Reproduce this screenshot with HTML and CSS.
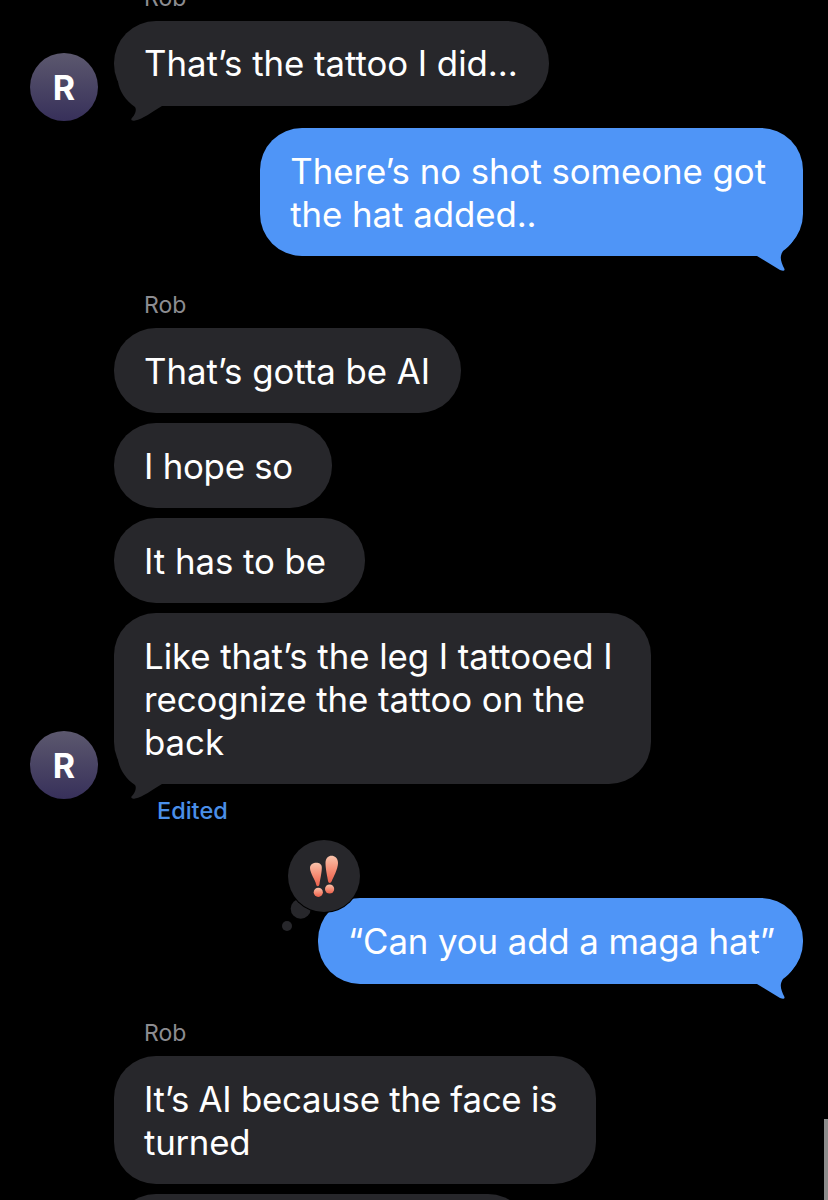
FILE: index.html
```html
<!DOCTYPE html>
<html lang="en">
<head>
<meta charset="utf-8">
<title>Messages</title>
<link rel="stylesheet" href="styles.css">
</head>
<body>
<main class="thread">
  <div class="row label-row"><span class="slot"></span><span class="sender">Rob</span></div>

  <div class="row in">
    <div class="avatar">R</div>
    <div class="bubble dark first">That’s the tattoo I did...
      <svg class="tail tail-in" viewBox="0 0 50 40" aria-hidden="true"><path d="M0 0 C1 10 8 20 17 26 C19 29 17 34 13.500 37.500 C12.500 39.500 15 40 17 39.500 C25 38 34 31 44 25 L44 0 Z"/></svg>
    </div>
  </div>

  <div class="row out gap-out">
    <div class="bubble blue wrapped-out">There’s no shot someone got<br>the hat added..
      <svg class="tail tail-out" viewBox="0 0 50 50" aria-hidden="true"><path d="M3 31 L26 45 Q31 47 30.500 44 C27 37 25 32 29 26 C36 21 43 13 46 0 L3 0 Z"/></svg>
    </div>
  </div>

  <div class="row label-row gap-label"><span class="slot"></span><span class="sender">Rob</span></div>
  <div class="row in"><span class="slot"></span><div class="bubble dark">That’s gotta be AI</div></div>
  <div class="row in gap-in"><span class="slot"></span><div class="bubble dark wrapped tight">I hope so</div></div>
  <div class="row in gap-in"><span class="slot"></span><div class="bubble dark wrapped">It has to be</div></div>
  <div class="row in gap-in">
    <div class="avatar">R</div>
    <div class="bubble dark wrapped">Like that’s the leg I tattooed I<br>recognize the tattoo on the<br>back
      <svg class="tail tail-in" viewBox="0 0 50 40" aria-hidden="true"><path d="M0 0 C1 10 8 20 17 26 C19 29 17 34 13.500 37.500 C12.500 39.500 15 40 17 39.500 C25 38 34 31 44 25 L44 0 Z"/></svg>
    </div>
  </div>
  <div class="row label-row edited-row"><span class="slot"></span><span class="edited">Edited</span></div>

  <div class="row out gap-react">
    <div class="bubble blue quote">“Can you add a maga hat”
      <svg class="tail tail-out" viewBox="0 0 50 50" aria-hidden="true"><path d="M3 31 L26 45 Q31 47 30.500 44 C27 37 25 32 29 26 C36 21 43 13 46 0 L3 0 Z"/></svg>
      <svg class="reaction" viewBox="0 0 86 96" aria-hidden="true">
        <defs>
          <linearGradient id="mark" x1="0" y1="0" x2="0" y2="1">
            <stop offset="0" stop-color="#f9c3ab"/>
            <stop offset="0.55" stop-color="#f58a72"/>
            <stop offset="1" stop-color="#ec5f4a"/>
          </linearGradient>
        </defs>
        <circle class="r-fill" cx="9" cy="88" r="5"/>
        <circle class="r-fill" cx="22.700" cy="70.700" r="10"/>
        <circle class="r-ring" cx="46" cy="38" r="37"/>
        <circle class="r-fill" cx="46" cy="38" r="36"/>
        <path class="r-mark" d="M32 30 C32 23.500 43.500 23 43.800 29 C44 34 42 42 41.500 46 C41 49 38.500 49 38 46 C37.300 42 32 35 32 30 Z"/>
        <circle class="r-mark" cx="40.300" cy="54.300" r="4.600"/>
        <path class="r-mark" d="M47.500 25 C47.500 15 60 16 60 25 C60 31 55 40 53.800 43 C52.800 45.500 50.500 45.500 50 43 C49.500 39 47.500 31 47.500 25 Z"/>
        <circle class="r-mark" cx="51.600" cy="51" r="4.600"/>
      </svg>
    </div>
  </div>

  <div class="row label-row gap-label-2"><span class="slot"></span><span class="sender">Rob</span></div>
  <div class="row in"><span class="slot"></span><div class="bubble dark wrapped tight">It’s AI because the face is<br>turned</div></div>
  <div class="row in gap-in"><span class="slot"></span><div class="bubble dark cut">&nbsp;</div></div>
</main>
<div class="scrollbar"></div>
</body>
</html>
```
FILE: styles.css
```css
* { box-sizing: border-box; }
html, body { margin: 0; height: 1200px; overflow: hidden; background: #000; }
body { position: relative; font-family: Inter, "Liberation Sans", sans-serif; color: #fff; }

.thread { display: flex; flex-direction: column; margin-top: -17px; padding: 0 25px 0 30px; }

.row { display: flex; align-items: flex-end; gap: 16px; }
.row.out { justify-content: flex-end; }
.slot { width: 68px; flex: none; }

.label-row { height: 30px; margin-bottom: 8px; align-items: center; }
.sender { font-size: 23px; color: #8c8c91; padding-left: 30px; }
.edited { font-size: 23.500px; font-weight: 500; color: #4a8fe8; padding-left: 43px; }

.gap-in { margin-top: 10px; }
.gap-out { margin-top: 22px; }
.gap-label { margin-top: 34px; }
.gap-label-2 { margin-top: 34px; }
.edited-row { margin-top: 11px; margin-bottom: 0; }
.gap-react { margin-top: 73px; }

.avatar {
  width: 68px; height: 68px; flex: none; margin-bottom: -15px;
  border-radius: 50%;
  display: flex; align-items: center; justify-content: center;
  background: linear-gradient(#5c586e, #37305a);
  font-weight: 700; font-size: 34px; color: #fff;
}

.bubble {
  position: relative;
  padding: 22px 31px 20px 30px;
  border-radius: 42px;
  font-size: 34.800px; line-height: 43px; letter-spacing: -0.050px;
  white-space: nowrap;
}
.dark { background: #27272b; }
.blue { background: #4f95f7; }
.first { padding-top: 21px; padding-bottom: 21px; }
.wrapped { padding-right: 39px; }
.wrapped-out { padding-right: 37px; padding-left: 30px; }
.tight { letter-spacing: -0.250px; }
.quote { padding: 22px 28px 21px 30px; letter-spacing: -0.100px; }
.cut { width: 416px; }

.tail { position: absolute; display: block; }
.tail-in { width: 50px; height: 40px; left: 4px; bottom: -15px; fill: #27272b; }
.tail-out { width: 50px; height: 50px; right: -1px; bottom: -19px; fill: #4f95f7; }

.reaction { position: absolute; left: -40px; top: -60px; width: 86px; height: 96px; display: block; }
.r-fill { fill: #27272b; }
.r-ring { fill: #000; }
.r-mark { fill: url(#mark); }

.scrollbar { position: absolute; right: 0; top: 1119px; width: 4px; height: 81px; background: #8d8d8d; }
```
